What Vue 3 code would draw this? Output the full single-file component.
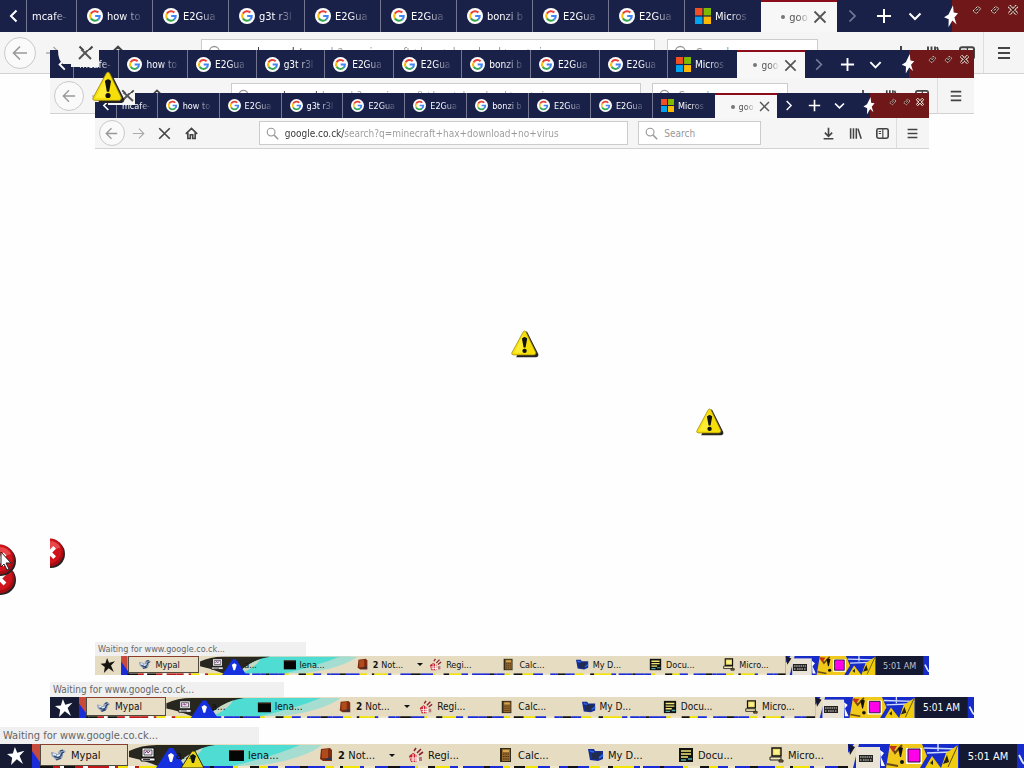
<script setup>
const layers = [
  { id: 'outer', status: 'Waiting for www.google.co.ck...' },
  { id: 'middle', status: 'Waiting for www.google.co.ck...' },
  { id: 'inner', status: 'Waiting for www.google.co.ck...' },
]
const tabs = [
  { icon: 'google', text: 'how to' },
  { icon: 'google', text: 'E2Gua' },
  { icon: 'google', text: 'g3t r3l' },
  { icon: 'google', text: 'E2Gua' },
  { icon: 'google', text: 'E2Gua' },
  { icon: 'google', text: 'bonzi b' },
  { icon: 'google', text: 'E2Gua' },
  { icon: 'google', text: 'E2Gua' },
  { icon: 'microsoft', text: 'Micros' },
]
const tasks = [
  { icon: 'computer', text: 'a...', wide: true },
  { icon: 'console', text: 'lena...' },
  { icon: 'book', text: 'Not...', count: '2', menu: true },
  { icon: 'regedit', text: 'Regi...' },
  { icon: 'calc', text: 'Calc...' },
  { icon: 'folder', text: 'My D...' },
  { icon: 'notes', text: 'Docu...' },
  { icon: 'network', text: 'Micro...' },
]
const palette = ['#1a2bd8', '#f2e400', '#1a2bd8', '#111', '#f2e400', '#1a2bd8', '#efe6c8', '#1a2bd8', '#f2e400']
const warm = ['#111', '#f2e400', '#c01818', '#fff', '#c01818', '#111', '#f2e400', '#fff']
const strip = []
let sx = 40
let k = 0
while (sx < 850) {
  const w = 3 + ((k * 7) % 10)
  const colors = sx < 160 ? warm : palette
  strip.push({ x: sx, w, fill: colors[(k * 5 + (k >> 2)) % colors.length] })
  sx += w
  k++
}
</script>

<template>
  <svg class="defs" aria-hidden="true">
    <symbol id="google" viewBox="0 0 16 16">
      <circle cx="8" cy="8" r="8" fill="#fff" />
      <path d="M3.9 5.6A4.8 4.8 0 0 1 11.4 4.6" fill="none" stroke="#ea4335" stroke-width="2.1" />
      <path d="M3.9 5.5A4.8 4.8 0 0 0 3.9 10.5" fill="none" stroke="#fbbc05" stroke-width="2.1" />
      <path d="M3.9 10.4A4.8 4.8 0 0 0 11.2 11.5" fill="none" stroke="#34a853" stroke-width="2.1" />
      <path d="M11.2 11.6A4.8 4.8 0 0 0 12.7 8H8.2" fill="none" stroke="#4285f4" stroke-width="2.1" />
    </symbol>
    <symbol id="microsoft" viewBox="0 0 16 16">
      <path d="M0 0h7.4v7.4H0z" fill="#f25022" /><path d="M8.6 0H16v7.4H8.6z" fill="#7fba00" />
      <path d="M0 8.6h7.4V16H0z" fill="#00a4ef" /><path d="M8.6 8.6H16V16H8.6z" fill="#ffb900" />
    </symbol>
    <symbol id="prev" viewBox="0 0 16 16"><path d="M11.5 2.5 6 8l5.5 5.5" fill="none" stroke="currentColor" stroke-width="2" /></symbol>
    <symbol id="next" viewBox="0 0 16 16"><path d="M4.5 2.5 10 8l-5.5 5.5" fill="none" stroke="currentColor" stroke-width="1.7" /></symbol>
    <symbol id="plus" viewBox="0 0 16 16"><path d="M8 1v14M1 8h14" stroke="currentColor" stroke-width="2" /></symbol>
    <symbol id="down" viewBox="0 0 16 16"><path d="M2.5 5.5 8 11l5.5-5.5" fill="none" stroke="currentColor" stroke-width="2" /></symbol>
    <symbol id="close" viewBox="0 0 16 16"><path d="m2.5 2.5 11 11M13.5 2.5l-11 11" stroke="currentColor" stroke-width="1.8" /></symbol>
    <symbol id="stop" viewBox="0 0 16 16"><path d="m1.5 1.5 13 13M14.5 1.5l-13 13" stroke="currentColor" stroke-width="2" /></symbol>
    <symbol id="back" viewBox="0 0 16 16"><path d="M15 8H1.5M8 1.5 1.5 8 8 14.5" fill="none" stroke="currentColor" stroke-width="1.6" /></symbol>
    <symbol id="forward" viewBox="0 0 16 16"><path d="M1 8h13.5M8.5 2l6 6-6 6" fill="none" stroke="currentColor" stroke-width="1.4" /></symbol>
    <symbol id="home" viewBox="0 0 16 16"><path d="M1 8.5 8 1.7l7 6.8M3.5 7v7.2h3V9.5h3v4.7h3V7" fill="none" stroke="currentColor" stroke-width="2" /></symbol>
    <symbol id="search" viewBox="0 0 16 16"><circle cx="6.3" cy="6.3" r="4.8" fill="none" stroke="currentColor" stroke-width="1.4" /><path d="m10 10 5 5" stroke="currentColor" stroke-width="1.8" /></symbol>
    <symbol id="download" viewBox="0 0 16 16"><path d="M8 1v10M3.5 7 8 11.5 12.5 7M2 14.5h12" fill="none" stroke="currentColor" stroke-width="2" /></symbol>
    <symbol id="library" viewBox="0 0 16 16"><path d="M2 1.5v13M5.5 1.5v13M9 1.5v13M11 2l4 12.5" stroke="currentColor" stroke-width="1.9" /></symbol>
    <symbol id="sidebar" viewBox="0 0 16 16"><rect x="1" y="2.2" width="14" height="11.6" rx="2" fill="none" stroke="currentColor" stroke-width="2" /><path d="M8.4 2v12M3.3 5.5h3M3.3 8h3" stroke="currentColor" stroke-width="1.4" /></symbol>
    <symbol id="menu" viewBox="0 0 16 16"><path d="M2 3h12M2 8h12M2 13h12" stroke="currentColor" stroke-width="1.8" /></symbol>
    <symbol id="star" viewBox="0 0 16 16"><path d="m7 0 2.1 5 6.4-1.6-4.3 4.7 3 6.9-5.5-4.2L3.6 16l1-6.4L0 6.2l5.2-.5z" fill="currentColor" /></symbol>
    <symbol id="flag" viewBox="0 0 14 22"><path d="m9 0 .7 7.2L14 8l-3.6 4.2 2.2 7-4.2-4L4.5 22l.2-8L0 12l4.5-2.8z" fill="currentColor" /></symbol>
    <symbol id="diamond" viewBox="0 0 10 10"><path d="m1 6 4.6-4.5 3.2 2L4.5 8.5z" fill="#3d1010" stroke="#f5ded2" stroke-width="1" stroke-dasharray="1.5 .6" /><path d="m4 5.6 2-2" stroke="#fff" /></symbol>
    <symbol id="cross" viewBox="0 0 10 10"><path d="m1 1 8 8M9 1 1 9" stroke="#f5ded2" stroke-width="3.6" stroke-dasharray="1.6 .5" /><path d="m1 1 8 8M9 1 1 9" stroke="#3d1010" stroke-width="1.2" /></symbol>
    <symbol id="mypal" viewBox="0 0 16 16"><path d="M0 5c3 0 5 2 7 2 0-3 2-5 6-4l2 2-3 1c1 5-3 8-7 7l-2-2C1 10 0 8 0 5" fill="#8fa3bf" /><path d="M3 9c4 3 7 1 8-3l2-1M5 13l5-2M9 4l3-1" fill="none" stroke="#2c4068" stroke-width="1.3" /><path d="m6 9 3-1M2 7l3 1" stroke="#e8f2ff" stroke-width="1.5" /></symbol>
    <symbol id="computer" viewBox="0 0 16 16"><rect x="2" y="1" width="12" height="9" fill="#fff" stroke="#111" /><path d="M4 3h8v5H4z" fill="#e9e4f3" stroke="#333" stroke-width=".8" /><path d="m5 6 2-2 1 2 2-2" fill="none" stroke="#a02780" /><path d="M1 11h14v3H1z" fill="#fff" stroke="#111" /><path d="M3 12.5h7" stroke="#333" /></symbol>
    <symbol id="console" viewBox="0 0 16 16"><path d="M1 3h15v11H1z" fill="#060606" /><path d="M1 3h15v1H1z" fill="#5c3426" /></symbol>
    <symbol id="book" viewBox="0 0 16 16"><path d="m3 2 9-1 2 2v11H5l-3-2z" fill="#7d2c10" /><path d="m4 3 6-1v9H4z" fill="#b04b1b" /><path d="m6 13 7-3v3z" fill="#28334d" /></symbol>
    <symbol id="regedit" viewBox="0 0 16 16"><path d="M1 9 5 6l4 2v7H3z" fill="#c81e2d" /><path d="m9 6 4-4M11 8l4-3M6 4l2-3" stroke="#8b2530" stroke-width="1.6" /><path d="M2 11h8M3 13h9M5 7v8M8 7v8" stroke="#fff" stroke-width="1" /><path d="M11 10h3v4h-3z" fill="#b7777a" /></symbol>
    <symbol id="calc" viewBox="0 0 16 16"><path d="M2 1h11v14H2z" fill="#302a18" /><path d="M4 2h8v12H4z" fill="#98672a" /><path d="M5 3h6v2H5z" fill="#d6a750" /><path d="M5 7h6M5 9.5h6M5 12h6" stroke="#46321c" stroke-dasharray="1.5 .8" /></symbol>
    <symbol id="folder" viewBox="0 0 16 16"><path d="M0 2h6l1 2h8v8l-5 2-8-1z" fill="#162d92" /><path d="m4 6 9-1-2 7H4z" fill="#1f2c4c" /><path d="m2 4 4 1M11 11l4-3" stroke="#2c68e8" stroke-width="1.6" /></symbol>
    <symbol id="notes" viewBox="0 0 16 16"><path d="M1 1h14v14H1z" fill="#111" /><path d="M3 4h10M3 7h10M3 10h7" stroke="#f4e875" stroke-width="1.6" /><path d="M3 13h5M10 12h4" stroke="#4eb0aa" stroke-width="1.5" /></symbol>
    <symbol id="network" viewBox="0 0 16 16"><path d="M4 1h9v8H4z" fill="#ecda6b" stroke="#111" stroke-width="1.4" /><path d="M6 3h5v4H6z" fill="#fff18a" /><path d="M2 10h11v3H2z" fill="#f4e7b5" stroke="#222" /><path d="M11 13h4v2h-4z" fill="#a06d25" stroke="#222" /></symbol>
    <symbol id="warning" viewBox="0 0 32 32">
      <path d="M17 2q1-1 2 1l12 24q1 3-2 4H6z" fill="#242424" />
      <path d="M14 2q1.500-2 3 0L28.500 26q0 2-2 2.500H2.500Q0 28 1 26z" fill="#f6df08" stroke="#9c850c" stroke-width=".8" />
      <path d="M14 5 3.500 26H15z" fill="#ffed32" />
      <path d="M12.500 9.800q3-3.600 6 0L16.600 20h-2.200z" fill="#111" /><circle cx="15.500" cy="23.800" r="2.500" fill="#111" />
    </symbol>
    <symbol id="error" viewBox="0 0 32 32">
      <circle cx="17" cy="17" r="15" fill="#232323" /><circle cx="15.500" cy="15.500" r="15" fill="#a80c13" /><circle cx="15" cy="14" r="13.300" fill="#cf141b" />
      <path d="M4 10a13 13 0 0 1 23 0q-11 5-23 0" fill="#e7484b" /><path d="m10 10 11 11M21 10 10 21" stroke="#fff" stroke-width="4" />
    </symbol>
  </svg>

  <main class="desktop">
    <section v-for="layer in layers" :key="layer.id" class="layer" :class="layer.id">
      <nav class="tabs" aria-label="Browser tabs">
        <button class="tab scroll" aria-label="Scroll tabs left"><svg class="glyph"><use href="#prev" /></svg></button>
        <button class="tab first"><span class="fade">mcafe-</span></button>
        <button v-for="(tab, i) in tabs" :key="i" class="tab">
          <svg class="favicon"><use :href="'#' + tab.icon" /></svg><span class="fade">{{ tab.text }}</span>
        </button>
        <div class="tab active">
          <span class="dot"></span><span class="fade">goo</span>
          <button class="plain" aria-label="Close tab"><svg class="glyph"><use href="#close" /></svg></button>
        </div>
        <div class="tab-tools">
          <button class="plain dim" aria-label="Scroll tabs right"><svg class="glyph"><use href="#next" /></svg></button>
          <button class="plain" aria-label="New tab"><svg class="glyph"><use href="#plus" /></svg></button>
          <button class="plain" aria-label="List all tabs"><svg class="glyph"><use href="#down" /></svg></button>
        </div>
        <div class="window-tools">
          <svg class="flag-star"><use href="#flag" /></svg>
          <button class="plain" aria-label="Minimize"><svg><use href="#diamond" /></svg></button>
          <button class="plain" aria-label="Restore"><svg><use href="#diamond" /></svg></button>
          <button class="plain" aria-label="Close window"><svg><use href="#cross" /></svg></button>
        </div>
      </nav>

      <div class="toolbar">
        <div class="nav">
          <button class="plain back" aria-label="Back"><svg><use href="#back" /></svg></button>
          <button class="plain forward" aria-label="Forward"><svg><use href="#forward" /></svg></button>
          <button class="plain" aria-label="Stop"><svg><use href="#stop" /></svg></button>
          <button class="plain" aria-label="Home"><svg><use href="#home" /></svg></button>
        </div>
        <label class="field address"><svg><use href="#search" /></svg>
          <input aria-label="Address" value="google.co.ck/search?q=minecraft+hax+download+no+virus" />
        </label>
        <label class="field lookup"><svg><use href="#search" /></svg>
          <input aria-label="Search" placeholder="Search" />
        </label>
        <div class="actions">
          <button class="plain" aria-label="Downloads"><svg><use href="#download" /></svg></button>
          <button class="plain" aria-label="Library"><svg><use href="#library" /></svg></button>
          <button class="plain" aria-label="Sidebars"><svg><use href="#sidebar" /></svg></button>
        </div>
        <button class="plain app-menu" aria-label="Menu"><svg><use href="#menu" /></svg></button>
      </div>

      <div class="page"></div>
      <div class="status">{{ layer.status }}</div>

      <footer class="taskbar">
        <svg class="paint" viewBox="0 0 1024 24" preserveAspectRatio="none" aria-hidden="true">
          <path d="M0 0h1024v24H0z" fill="#e5dcc2" />
          <path d="M203 1h110q-10 11-46 16l-30 5h-70q12-15 36-21" fill="#4fdcd2" />
          <path d="M129 7q12-6 28-6h58q-14 2-25 9l-18 13h-12q-16-7-31-10z" fill="#28271f" />
          <path d="M203 4q-14 5-24 14l-5 3 10-1q14-7 19-16" fill="#c9d6c0" />
          <path d="M300 1h22q-18 14-60 20l-30 1q40-9 68-21" fill="#a5ded0" />
          <path d="M32 0h8v24h-8z" fill="#c84a3a" /><path d="m32 7 10 14v3H32z" fill="#1a2bd8" />
          <rect v-for="(bit, i) in strip" :key="i" :x="bit.x" y="22" :width="bit.w" height="2" :fill="bit.fill" />
          <path d="m156 24 13-20h4l13 20z" fill="#1430df" /><path d="m168 11 3-2 3 2-2 7h-2z" fill="#fff" />
          <g v-if="layer.id === 'outer'"><path d="m181 24 11-17h3l9 17z" fill="#ead719" stroke="#292611" /><path d="m190 12 3-2 3 2-2 7h-2z" fill="#111" /></g>
          <path d="M848 0h176v24H848z" fill="#172bc9" />
          <path d="m848 9 6-9h5l-6 24h-5z" fill="#e5dcc2" /><path d="m848 0 7 3-5 8z" fill="#17172e" />
          <path d="M856 3h24v21h-24z" fill="#e9e4d5" />
          <path d="m880 6 4 3-3 4 4 9h-4z" fill="#fff" />
          <path d="m886 24 4-24h32l5 12-7 12z" fill="#f0c91a" />
          <path d="m891 2 4 7 7-8M887 20l11 2" fill="none" stroke="#6b4a14" stroke-width="2" />
          <path d="m889 2 4 6 4-6" fill="#c2321b" /><path d="m898 4 3-1 2 1-2 9h-1z" fill="#111" /><circle cx="902" cy="18" r="2" fill="#111" />
          <path d="M924 4l34 1M927 9l24-1M938 0v7" stroke="#cddcff" stroke-width="1.5" fill="none" />
          <path d="m925 24 7-12 9 12 5-15 12-8v23z" fill="#efcc10" />
          <path d="m930 19 3-3v5zM943 20l4-9 2 7z" fill="#242014" /><path d="m958 1-10 22" stroke="#5c4710" />
          <path d="M906 4h16v16h-16z" fill="#fff" /><path d="M908 5h12v13h-12z" fill="#ff00e9" stroke="#1c1530" stroke-width="1" />
          <path d="M959 0h58v24h-58z" fill="#141831" />
          <path d="m1019 11 3 6 2 3" stroke="#dde9ff" stroke-width="2" fill="none" />
        </svg>
        <button class="start" aria-label="Start"><svg><use href="#star" /></svg></button>
        <span></span>
        <button class="task current"><svg><use href="#mypal" /></svg><span>Mypal</span></button>
        <button v-for="task in tasks" :key="task.icon" class="task" :class="{ first: task.wide }">
          <svg><use :href="'#' + task.icon" /></svg>
          <span><b v-if="task.count">{{ task.count }}&nbsp;</b>{{ task.text }}</span>
          <i v-if="task.menu" class="caret"></i>
        </button>
        <button class="plain keyboard" aria-label="Keyboard"><svg viewBox="0 0 14 7"><path d="M0 0h14v7H0z" fill="#222" /><path d="M1 2h12M1 5h2M4 5h6M11 5h2" stroke="#e9e4d5" stroke-dasharray="1.5 .7" /></svg></button>
        <span></span>
        <time class="clock">5:01 AM</time>
      </footer>

      <svg v-if="layer.id === 'middle'" class="cut middle-cut" viewBox="0 0 50 17" aria-hidden="true"><path d="M8 0h41v17H21v-3H13q-5-4-5-14" fill="#f5f5f5" /><path d="m29-3 12 12M41-3 29 9" stroke="#555" stroke-width="2" /></svg>
      <svg v-if="layer.id === 'inner'" class="cut inner-cut" viewBox="0 0 40 12" aria-hidden="true"><path d="M0 0h40v12H13V9H0z" fill="#f5f5f5" /><path d="m27-2 11 10M37-2 27 8" stroke="#555" stroke-width="2" /></svg>
      <svg v-if="layer.id === 'middle'" class="error clipped" viewBox="16 0 16 32"><use href="#error" width="32" height="32" /></svg>
    </section>

    <svg class="sprite one"><use href="#warning" /></svg>
    <svg class="sprite two"><use href="#warning" /></svg>
    <svg class="sprite three"><use href="#warning" /></svg>
    <svg class="error low"><use href="#error" /></svg>
    <svg class="error high"><use href="#error" /></svg>
    <svg class="cursor" viewBox="0 0 12 20"><path d="M1 1v15l3-3 3 6 2-1-3-6h5z" fill="#fff" stroke="#222" /></svg>
  </main>
</template>

<style>
html, body, #app { height: 100%; }
body { overflow: hidden; background: #fefefe; }
</style>

<style scoped>
* { box-sizing: border-box; }
svg { display: block; flex: none; }
button { font: inherit; color: inherit; border: 0; padding: 0; background: none; }
.defs { position: absolute; width: 0; height: 0; }
.desktop { position: relative; height: 100%; overflow: hidden; font-family: "DejaVu Sans Condensed", "DejaVu Sans", sans-serif; font-stretch: condensed; }
.layer {
  --bar: 32px; --tools: 42px; --task: 24px; --note: 17px; --fav: 16px; --ico: 16px; --gap: 4px; --pad: 10px; --text: 11px; --ctl: 10px; --box: 28px;
  position: absolute; inset: 0; display: flex; flex-direction: column; background: #fefefe; font-size: var(--text);
}
.middle { --bar: 28px; --tools: 36px; --task: 21px; --note: 15px; --fav: 15px; --ico: 14px; --pad: 8px; --text: 10px; --ctl: 9px; --box: 26px; inset: 50px; }
.inner { --bar: 25px; --tools: 31px; --task: 19px; --note: 14px; --fav: 13px; --ico: 13px; --pad: 8px; --text: 9px; --ctl: 8px; --box: 24px; inset: 93px 95px; }

.tabs { display: grid; grid-template-columns: minmax(0, 27fr) minmax(0, 50fr) repeat(10, minmax(0, 76fr)) minmax(0, 115fr) minmax(0, 72fr); height: var(--bar); background: #1a2149; color: #fff; }
.tab { display: flex; align-items: center; min-width: 0; gap: var(--gap); padding-left: var(--pad); border-right: 1px solid #737791; }
.tab.scroll { justify-content: center; padding: 0; }
.tab.first { padding-left: 5px; }
.tab:nth-child(11) { border-right: 0; }
.favicon { width: var(--fav); height: var(--fav); }
.glyph { width: var(--fav); height: var(--fav); }
.fade { white-space: nowrap; text-align: left; mask-image: linear-gradient(to right, #000 45%, rgba(0, 0, 0, 0.15)); }
.tab.first .fade { mask-image: linear-gradient(to right, #000 65%, rgba(0, 0, 0, 0.15)); }
.tab.active { justify-content: space-between; background: #f7f7f7; color: #555; border: 0; border-top: 2px solid #8c0c1c; padding: 0 9px 0 20px; }
.middle .active, .inner .active { padding-left: 16px; padding-right: 7px; }
.dot { width: 4px; height: 4px; border-radius: 50%; background: #777; }
.tab-tools { display: grid; grid-template-columns: repeat(3, 1fr); padding-right: 19%; }
.plain { display: grid; place-items: center; min-width: 0; }
.dim { color: #767b98; }
.inner .dim { color: #fff; }
.window-tools { position: relative; display: grid; grid-template-columns: repeat(3, 1fr); align-items: start; padding: 5px 2px 0 16px; background: #701819; }
.window-tools .plain svg { width: var(--ctl); height: var(--ctl); }
.flag-star { position: absolute; left: -8px; top: 15%; width: 14px; height: 70%; color: #fff; }

.toolbar { display: grid; grid-template-columns: minmax(0, 201fr) minmax(0, 454fr) minmax(0, 12fr) minmax(0, 151fr) minmax(0, 66fr) minmax(0, 99fr) minmax(0, 41fr); align-items: center; height: var(--tools); background: #f5f5f5; border-bottom: 1px solid #d2d2d2; color: #444; }
.toolbar svg { width: var(--ico); height: var(--ico); }
.nav { display: grid; grid-template-columns: repeat(4, 1fr); padding: 0 33% 0 2%; align-items: center; }
.back { justify-self: center; width: calc(var(--box) + 4px); height: calc(var(--box) + 4px); border: 1px solid #c9c9c9; border-radius: 50%; background: #fafafa; color: #999; }
.inner .back { width: 26px; height: 26px; }
.forward { color: #aaa; }
.field { display: flex; align-items: center; gap: 6px; height: var(--box); padding-left: 6px; border: 1px solid #ccc; background: #fff; color: #999; font-size: 10px; }
.inner .field svg { width: 13px; height: 13px; }
.field input { flex: 1; min-width: 0; padding: 0; border: 0; outline: 0; font: inherit; background: transparent; color: #777; }
.field input::placeholder { color: #999; opacity: 1; }
.address input { color: transparent; background: linear-gradient(to right, #333 59px, #999 59px); background-clip: text; -webkit-background-clip: text; }
.outer .field { font-size: 12px; }
.outer .address input { background: linear-gradient(to right, #333 71px, #999 71px); background-clip: text; -webkit-background-clip: text; }
.middle .field { font-size: 11px; }
.middle .address input { background: linear-gradient(to right, #333 65px, #999 65px); background-clip: text; -webkit-background-clip: text; }
.lookup { grid-column: 4; }
.actions { grid-column: 6; display: grid; grid-template-columns: repeat(3, 1fr); }
.app-menu { height: 100%; border-left: 1px solid #ddd; }
.page { flex: 1; }
.status { width: 25.3%; height: var(--note); line-height: var(--note); padding-left: 3px; background: #f0f0f0; color: #666; white-space: nowrap; }

.taskbar { position: relative; display: grid; grid-template-columns: minmax(0, 32fr) minmax(0, 8fr) minmax(0, 88fr) repeat(8, minmax(0, 90fr)) minmax(0, 35fr) minmax(0, 76fr) minmax(0, 58fr) minmax(0, 7fr); height: var(--task); color: #111; }
.taskbar > * { position: relative; }
.taskbar > .paint { position: absolute; inset: 0; width: 100%; height: 100%; }
.start { display: grid; place-items: center; background: #161a33; color: #fff; }
.start svg { width: 20px; height: 18px; }
.inner .start { background: #e5dcc2; color: #17150f; }
.inner .start svg { height: 15px; }
.task { display: flex; align-items: center; gap: 4px; padding: 0 0 2px 10px; min-width: 0; white-space: nowrap; }
.task svg { width: var(--ico); height: var(--ico); }
.task.current { height: calc(var(--task) - 2px); padding: 0 0 0 10px; border: 1px solid #514c42; border-top-color: #8a3f2f; background: #e8ddc5; }
.task.first { padding-left: 12px; gap: 20px; }
.caret { margin-left: 10px; border: 3px solid transparent; border-top-color: #111; border-bottom: 0; }
.keyboard svg { width: 14px; height: 7px; }
.keyboard { padding-top: 4px; }
.clock { display: grid; place-items: center; color: #fff; white-space: nowrap; }
.inner .clock { color: #bfc2cc; }

.cut, .sprite, .error, .cursor { position: absolute; }
.middle-cut { left: 0; top: 0; width: 50px; height: 17px; }
.inner-cut { left: 0; top: 0; width: 40px; height: 12px; }
.sprite { width: 28px; height: 28px; }
.one { left: 92px; top: 71px; width: 33px; height: 33px; }
.two { left: 511px; top: 330px; }
.three { left: 696px; top: 408px; }
.error { width: 32px; height: 32px; }
.low { left: -16px; top: 563px; }
.high { left: -16px; top: 544px; }
.clipped { left: 0; top: 488px; width: 15px; height: 30px; }
.cursor { left: 0; top: 551px; width: 12px; height: 20px; }
</style>
